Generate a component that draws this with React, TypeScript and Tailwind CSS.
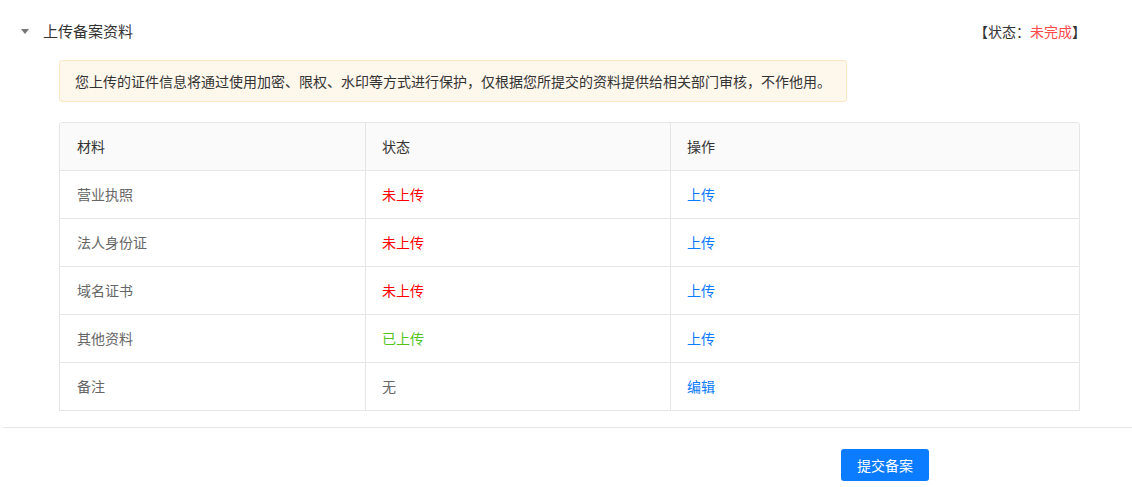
const rows = [
  { name: "营业执照", status: "未上传", tone: "red", action: "上传" },
  { name: "法人身份证", status: "未上传", tone: "red", action: "上传" },
  { name: "域名证书", status: "未上传", tone: "red", action: "上传" },
  { name: "其他资料", status: "已上传", tone: "green", action: "上传" },
  { name: "备注", status: "无", tone: "plain", action: "编辑" },
];

const toneClass: Record<string, string> = {
  red: "text-[#ff0000]",
  green: "text-[#52c41a]",
  plain: "text-[#666]",
};

export default function App() {
  return (
    <div className="w-[1132px] h-[487px] bg-white text-[14px] text-[#333] font-['Noto_Sans_CJK_SC','Noto_Sans',sans-serif] overflow-hidden">
      {/* section header */}
      <div className="flex items-center h-[22px] mt-[20px] pl-[21px] pr-[46px]">
        <span className="w-0 h-0 border-l-[4px] border-r-[4px] border-t-[5px] border-l-transparent border-r-transparent border-t-[#777]" />
        <span className="ml-[14px] text-[15px] leading-[22px]">上传备案资料</span>
        <span className="ml-auto leading-[22px]">
          【状态：<span className="text-[#ff4a4a]">未完成</span>】
        </span>
      </div>

      {/* notice */}
      <div className="ml-[59px] mt-[18px] w-[788px] h-[42px] flex items-center px-[15px] bg-[#fef7ec] border border-[#fde6c6] rounded-[3px] text-[14px] text-[#333] whitespace-nowrap">
        您上传的证件信息将通过使用加密、限权、水印等方式进行保护，仅根据您所提交的资料提供给相关部门审核，不作他用。
      </div>

      {/* materials table */}
      <div className="ml-[59px] mt-[20px] w-[1021px] border-x border-t border-[#e6e6e6] rounded-t-[4px] overflow-hidden">
        <div className="grid grid-cols-[305px_305px_1fr] h-[48px] bg-[#fafafa] border-b border-[#e6e6e6] text-[#333]">
          <div className="flex items-center pl-[17px]">材料</div>
          <div className="flex items-center pl-4 border-l border-[#e6e6e6]">状态</div>
          <div className="flex items-center pl-4 border-l border-[#e6e6e6]">操作</div>
        </div>
        {rows.map((r) => (
          <div key={r.name} className="grid grid-cols-[305px_305px_1fr] h-[48px] border-b border-[#e6e6e6]">
            <div className="flex items-center pl-[17px] text-[#666]">{r.name}</div>
            <div className={"flex items-center pl-4 border-l border-[#e6e6e6] " + toneClass[r.tone]}>
              {r.status}
            </div>
            <div className="flex items-center pl-4 border-l border-[#e6e6e6] text-[#0a7aff]">{r.action}</div>
          </div>
        ))}
      </div>

      <div className="ml-[3px] mt-[16px] h-px bg-[#e6e6e6]" />

      <button className="ml-[841px] mt-[21px] w-[88px] h-[32px] rounded-[3px] bg-[#0b7cff] text-white text-[14px]">
        提交备案
      </button>
    </div>
  );
}
